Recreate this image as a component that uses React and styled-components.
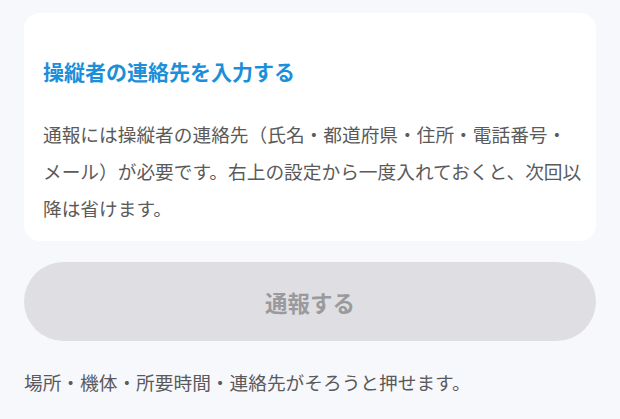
import React from "react";
import styled, { createGlobalStyle } from "styled-components";

const GlobalStyle = createGlobalStyle`
  html, body {
    margin: 0;
    padding: 0;
    background: #f7f8fc;
  }
  body {
    font-family: "Noto Sans CJK JP", "Noto Sans", sans-serif;
  }
`;

const Page = styled.div`
  padding: 13px 24px 0;
  display: flex;
  flex-direction: column;
`;

const Card = styled.section`
  background: #ffffff;
  border-radius: 16px;
  padding: 43px 10px 15px 19px;
  display: flex;
  flex-direction: column;
  gap: 29px;
`;

const Title = styled.h2`
  margin: 0;
  font-size: 21px;
  line-height: 31px;
  font-weight: 700;
  color: #1b8fd9;
`;

const Body = styled.p`
  margin: 0;
  font-size: 18.7px;
  line-height: 36.8px;
  color: #5a5a5a;
  line-break: strict;
`;

const NoBreak = styled.span`
  white-space: nowrap;
`;

const SubmitButton = styled.button`
  margin-top: 21px;
  height: 79px;
  border: none;
  border-radius: 40px;
  background: #dfdfe3;
  color: #9a9a9e;
  font-family: inherit;
  font-size: 22.5px;
  font-weight: 700;
  cursor: not-allowed;
`;

const Note = styled.p`
  margin: 26px 0 0;
  font-size: 18.7px;
  line-height: 29px;
  color: #5a5a5a;
`;

const App = () => {
  return (
    <>
      <GlobalStyle />
      <Page lang="ja">
        <Card>
          <Title>操縦者の連絡先を入力する</Title>
          <Body>
            通報には操縦者の連絡先（氏名・都道府県・住所・電話番号・<NoBreak>メール</NoBreak>）が必要です。右上の設定から一度入れておくと、次回以降は省けます。
          </Body>
        </Card>
        <SubmitButton disabled>通報する</SubmitButton>
        <Note>場所・機体・所要時間・連絡先がそろうと押せます。</Note>
      </Page>
    </>
  );
};

export default App;
